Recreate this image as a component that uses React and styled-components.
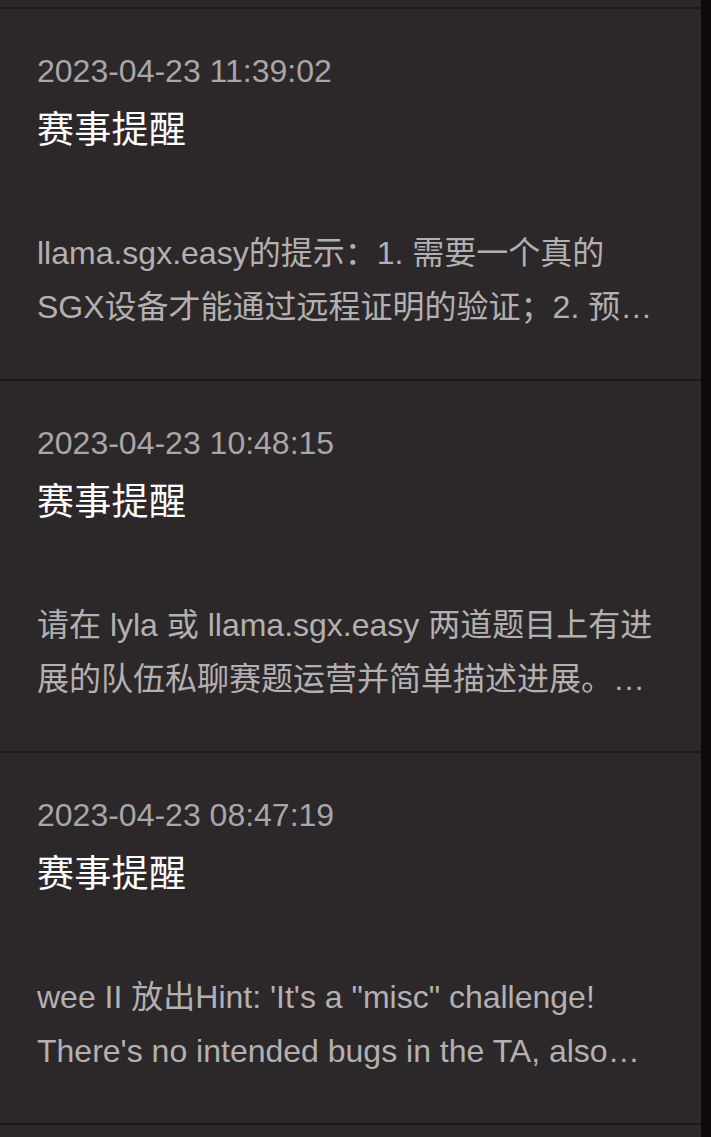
import React from 'react'
import styled, { createGlobalStyle } from 'styled-components'

const GlobalStyle = createGlobalStyle`
  html, body {
    margin: 0;
    padding: 0;
    background: #0e0a0b;
  }
  body {
    font-family: "Liberation Sans", Arial, "Noto Sans CJK SC", sans-serif;
  }
`

const notices = [
  {
    id: 1,
    time: '2023-04-23 11:39:02',
    title: '赛事提醒',
    body: 'llama.sgx.easy的提示：1. 需要一个真的SGX设备才能通过远程证明的验证；2. 预期解不需要使用任何SGX相关的漏洞。',
  },
  {
    id: 2,
    time: '2023-04-23 10:48:15',
    title: '赛事提醒',
    body: '请在 lyla 或 llama.sgx.easy 两道题目上有进展的队伍私聊赛题运营并简单描述进展。以便我们评估是否需要发放提示。',
  },
  {
    id: 3,
    time: '2023-04-23 08:47:19',
    title: '赛事提醒',
    body: "wee II 放出Hint: 'It's a \"misc\" challenge! There's no intended bugs in the TA, also OP-TEE itself is not the target.'",
  },
]

const App = () => {
  return (
    <Wrapper>
      <GlobalStyle />
      <List>
        <Tail />
        {notices.map((n) => {
          return (
            <Card key={n.id}>
              <Time>{n.time}</Time>
              <Title>{n.title}</Title>
              <Body>{n.body}</Body>
            </Card>
          )
        })}
        <Tail />
      </List>
      <Track />
    </Wrapper>
  )
}

const Wrapper = styled.div`
  display: flex;
  width: 711px;
  height: 1137px;
  overflow: hidden;
`

const List = styled.main`
  width: 701px;
  background: #2c2829;
  display: flex;
  flex-direction: column;
`

const Tail = styled.div`
  height: 7px;
  flex-shrink: 0;
  border-bottom: 2px solid #1c191a;
  &:last-child {
    border-bottom: none;
    height: 20px;
  }
`

const Card = styled.section`
  flex-shrink: 0;
  height: 372px;
  box-sizing: border-box;
  padding: 38px 37px 0;
  border-bottom: 2px solid #1c191a;
`

const Time = styled.div`
  font-size: 32px;
  line-height: 48px;
  color: #a9a6a7;
`

const Title = styled.h3`
  margin: 9px 0 0;
  font-size: 37px;
  line-height: 54px;
  font-weight: normal;
  color: #ffffff;
  letter-spacing: 0.3px;
  font-family: "Liberation Sans", "Noto Sans CJK SC", sans-serif;
`

const Body = styled.p`
  margin: 68px 0 0;
  font-size: 32px;
  line-height: 54px;
  color: #b3b0b1;
  display: -webkit-box;
  -webkit-line-clamp: 2;
  -webkit-box-orient: vertical;
  overflow: hidden;
`

const Track = styled.div`
  width: 10px;
  background: #0e0a0b;
`

export default App
